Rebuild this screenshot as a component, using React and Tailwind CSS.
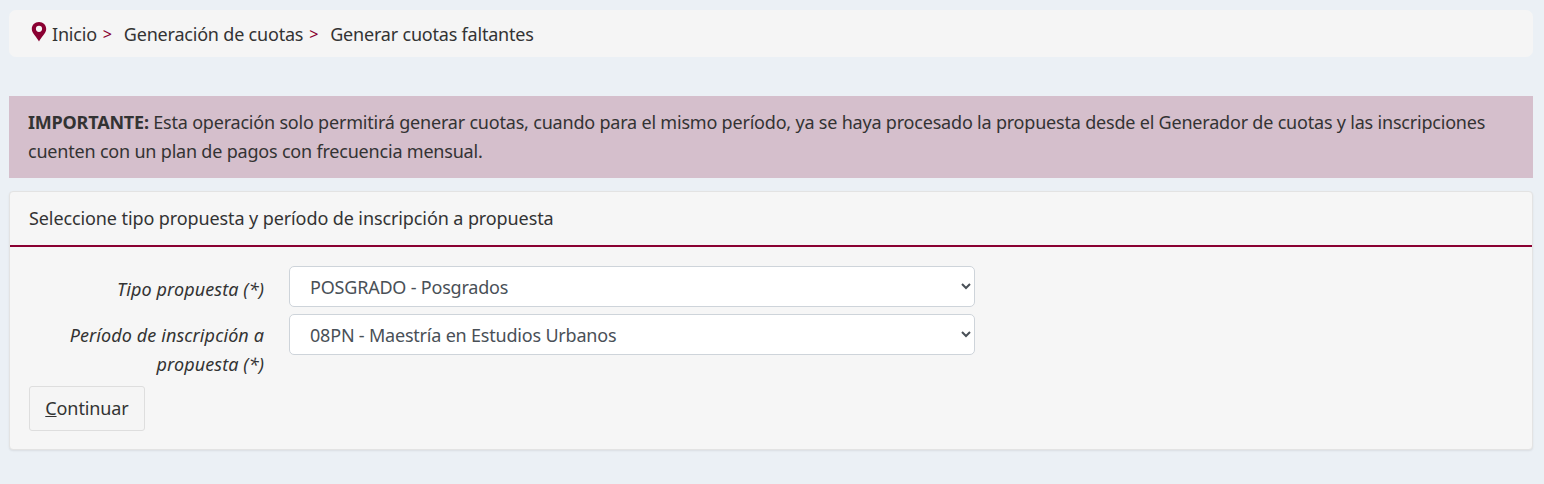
const SANS = "font-['Noto_Sans',sans-serif]";

function Sep() {
  return <span className="text-[#8a0032] mx-[6px] text-[16px]">&gt;</span>;
}

function Field({ label, value, mb, pt }) {
  return (
    <div className={`flex items-start ${mb}`}>
      <label className={`w-[235px] shrink-0 text-right italic leading-[29px] tracking-[0.1px] text-[#333] ${pt}`}>{label}</label>
      <select
        defaultValue={value}
        className="ml-[25px] w-[686px] h-[41px] rounded-[5px] border border-[#ced4da] bg-white pl-[16px] pr-[8px] tracking-[-0.2px] text-[#495057] outline-none"
      >
        <option>{value}</option>
      </select>
    </div>
  );
}

export default function App() {
  return (
    <div className={`${SANS} min-h-[484px] bg-[#ebf0f5] px-[9px] pr-[11px] pt-[10px] pb-[34px] text-[18px] tracking-[-0.1px] text-[#333]`}>
      {/* breadcrumb */}
      <div className="flex items-center h-[47px] rounded-[7px] bg-[#f5f5f5] pl-[21px] pt-[1px] tracking-[-0.2px]">
        <svg width="18" height="20" viewBox="0 0 18 20" className="mb-[4px] mr-[4px]">
          <path fillRule="evenodd" fill="#8a0032" d="M9 0C4.800 0 1.800 3 1.800 6.900 1.800 11.500 7 15 9 19.500c2-4.500 7.200-8 7.200-12.600C16.200 3 13.200 0 9 0zm0 3.700a3.100 3.100 0 1 1 0 6.200 3.100 3.100 0 0 1 0-6.200z" />
        </svg>
        <span>Inicio</span>
        <Sep />
        <span className="ml-[6px]">Generación de cuotas</span>
        <Sep />
        <span className="ml-[6px]">Generar cuotas faltantes</span>
      </div>

      {/* alert */}
      <div className="mt-[39px] h-[82px] bg-[#d5bfcc] pl-[19px] pr-[30px] pt-[12px] leading-[29px] tracking-[-0.2px]">
        <b>IMPORTANTE:</b> Esta operación solo permitirá generar cuotas, cuando para el mismo período, ya se haya procesado la propuesta desde el Generador de cuotas y las inscripciones cuenten con un plan de pagos con frecuencia mensual.
      </div>

      {/* card */}
      <div className="mt-[13px] h-[259px] rounded-[4px] border border-[#e3e3e3] bg-[#f6f6f6] shadow-[0_1px_2px_rgba(0,0,0,0.08)]">
        <div className="flex items-center h-[55px] border-b-2 border-[#8a0032] pl-[19px]">
          Seleccione tipo propuesta y período de inscripción a propuesta
        </div>
        <div className="px-[19px] pt-[19px]">
          <Field label="Tipo propuesta (*)" value="POSGRADO - Posgrados" mb="mb-[7px]" pt="pt-[9px]" />
          <Field label={<>Período de inscripción a<br />propuesta (*)</>} value="08PN - Maestría en Estudios Urbanos" mb="" pt="pt-[7px]" />
          <button className="mt-[7px] block w-[116px] h-[45px] rounded-[3px] border border-[#dedede] bg-[#f5f5f5] text-[#333]">
            <u>C</u>ontinuar
          </button>
        </div>
      </div>
    </div>
  );
}
